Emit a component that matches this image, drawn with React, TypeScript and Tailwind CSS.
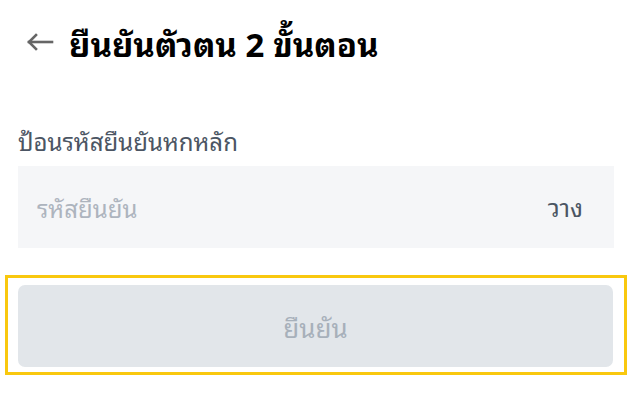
const FONT = {
  fontFamily: "'Noto Sans Thai Looped', 'Noto Sans Thai', Roboto, 'Noto Sans', 'DejaVu Sans', sans-serif",
}

function BackArrow() {
  return (
    <svg width="28" height="18" viewBox="0 0 28 18" fill="none" stroke="#666" strokeWidth="2.6" strokeLinecap="square">
      <path d="M3 9 H26" />
      <path d="M10 2 L3 9 L10 16" strokeLinejoin="miter" />
    </svg>
  )
}

export default function App() {
  return (
    <div className="w-[641px] h-[402px] bg-white" style={FONT}>
      <div className="flex items-center h-[84px] pl-[26px] gap-[15px]">
        <BackArrow />
        <h1 className="text-[33px] font-bold text-black leading-none">ยืนยันตัวตน 2 ขั้นตอน</h1>
      </div>

      <div className="px-[18px] pt-[41px]">
        <label className="block text-[24px] text-[#4b5563] leading-[30px] mb-[11px]">ป้อนรหัสยืนยันหกหลัก</label>
        <div className="flex items-center justify-between w-[596px] h-[82px] bg-[#f5f6f8] pl-[19px] pr-[31px]">
          <span className="text-[24px] text-[#adb4be]">รหัสยืนยัน</span>
          <span className="text-[25px] text-[#4b5563]">วาง</span>
        </div>
      </div>

      <div className="mt-[27px] ml-[5px] w-[622px] border-[3px] border-[#f9c80e] pl-[10px] pr-[10px] pt-[7px] pb-[5px]">
        <button className="w-[595px] h-[82px] rounded-[7px] bg-[#e2e6ea] text-[26px] text-[#a7b0ba]">ยืนยัน</button>
      </div>
    </div>
  )
}
